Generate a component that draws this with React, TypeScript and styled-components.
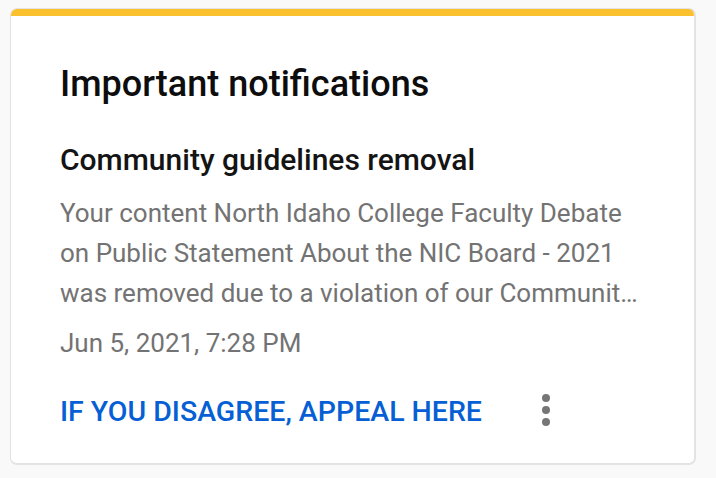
import styled, { createGlobalStyle } from "styled-components";

const GlobalStyle = createGlobalStyle`
  html, body {
    margin: 0;
    padding: 0;
    background-color: #f9f9f9;
    font-family: Roboto, "Noto Sans", Arial, sans-serif;
  }
`;

const App = () => {
  return (
    <Page>
      <GlobalStyle />
      <Card>
        <Stripe />
        <Body>
          <Title>Important notifications</Title>
          <Notice>
            <NoticeTitle>Community guidelines removal</NoticeTitle>
            <NoticeText>
              Your content North Idaho College Faculty Debate on Public
              Statement About the NIC Board - 2021 was removed due to a
              violation of our Community Guidelines. Learn more about our
              policies.
            </NoticeText>
            <NoticeDate>Jun 5, 2021, 7:28 PM</NoticeDate>
          </Notice>
          <Actions>
            <AppealLink href="#">If you disagree, appeal here</AppealLink>
            <MenuButton aria-label="More actions">
              <Dot />
              <Dot />
              <Dot />
            </MenuButton>
          </Actions>
        </Body>
      </Card>
    </Page>
  );
};

const Page = styled.div`
  padding: 8px 20px 12px 10px;
`;
const Card = styled.section`
  width: 686px;
  height: 457px;
  box-sizing: border-box;
  background-color: #ffffff;
  border: 1px solid #e3e3e3;
  border-bottom-width: 2px;
  border-right-width: 2px;
  border-radius: 7px;
  overflow: hidden;
  display: flex;
  flex-direction: column;
`;
const Stripe = styled.div`
  height: 7px;
  background-color: #fbc02d;
  flex-shrink: 0;
`;
const Body = styled.div`
  padding: 48px 49px 0 49px;
  display: flex;
  flex-direction: column;
`;
const Title = styled.h1`
  margin: 0;
  font-size: 36px;
  font-weight: 500;
  line-height: 40px;
  color: #0d0d0d;
`;
const Notice = styled.div`
  margin-top: 38px;
  display: flex;
  flex-direction: column;
`;
const NoticeTitle = styled.h2`
  margin: 0;
  font-size: 30px;
  font-weight: 500;
  line-height: 36px;
  color: #141414;
`;
const NoticeText = styled.p`
  margin: 15px 0 0;
  width: 582px;
  font-size: 26px;
  line-height: 40px;
  color: #737373;
  display: -webkit-box;
  -webkit-line-clamp: 3;
  -webkit-box-orient: vertical;
  overflow: hidden;
`;
const NoticeDate = styled.div`
  margin-top: 10px;
  font-size: 26px;
  line-height: 40px;
  color: #737373;
`;
const Actions = styled.div`
  margin-top: 29px;
  display: flex;
  align-items: center;
  width: 498px;
  justify-content: space-between;
`;
const AppealLink = styled.a`
  font-size: 28.5px;
  font-weight: 500;
  line-height: 40px;
  text-transform: uppercase;
  color: #065fd4;
  text-decoration: none;
`;
const MenuButton = styled.button`
  width: 24px;
  height: 40px;
  margin-top: -4px;
  padding: 0;
  border: none;
  background: none;
  display: flex;
  flex-direction: column;
  align-items: center;
  justify-content: center;
  gap: 4px;
  cursor: pointer;
`;
const Dot = styled.span`
  width: 8px;
  height: 8px;
  border-radius: 50%;
  background-color: #767676;
`;

export default App;
